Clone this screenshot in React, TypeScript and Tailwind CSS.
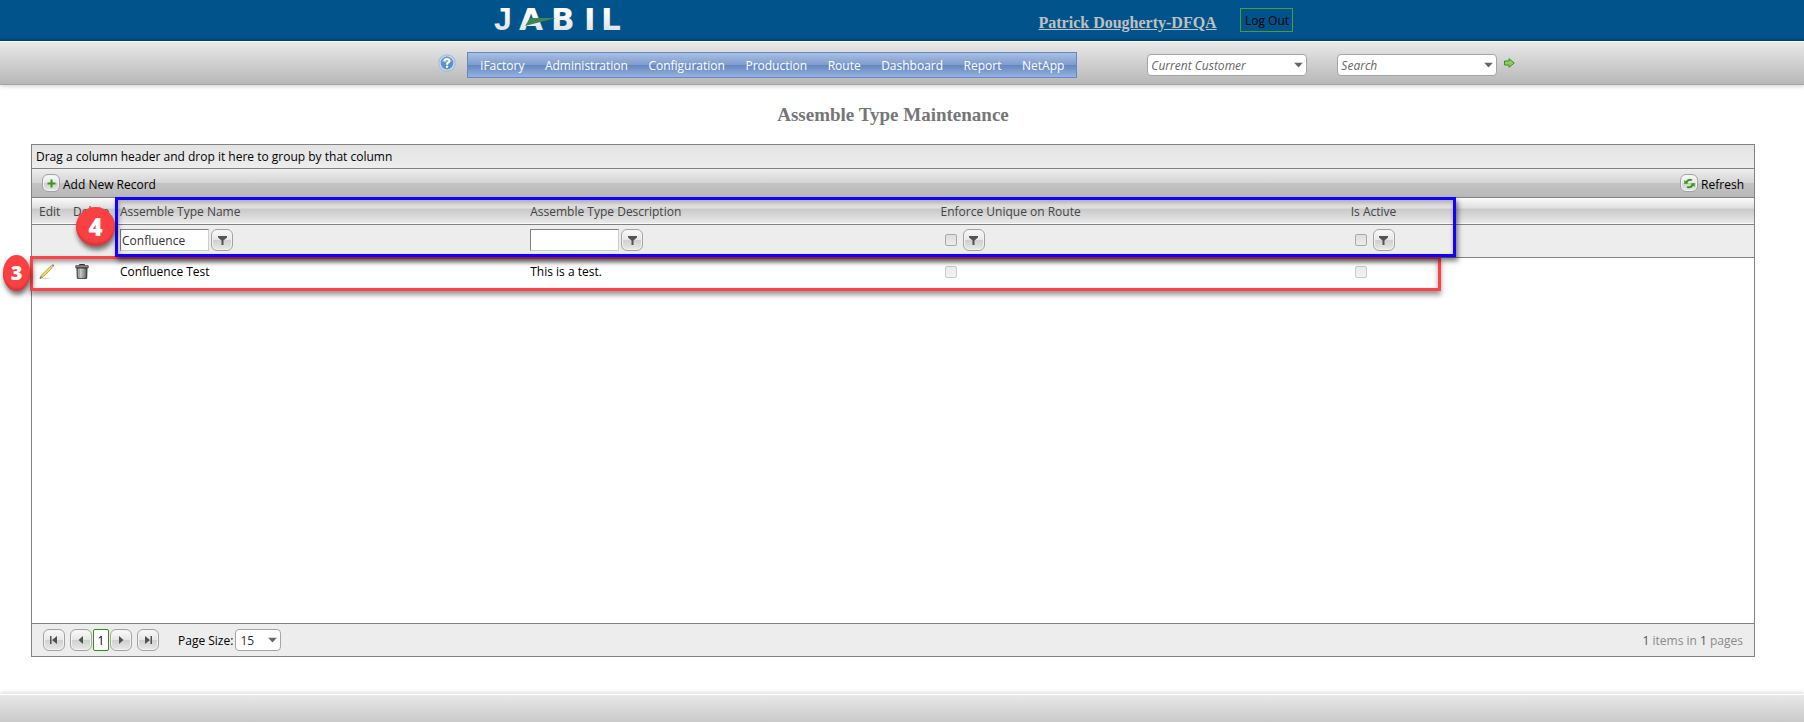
import React from "react";

const menu = ["iFactory", "Administration", "Configuration", "Production", "Route", "Dashboard", "Report", "NetApp"];

const glossy =
  "flex shrink-0 items-center justify-center rounded-md border border-[#a3a3a3] bg-[linear-gradient(#fafafa_0%,#e6e6e6_49%,#cfcfcf_50%,#e9e9e9_100%)] shadow-[inset_0_0_0_1px_#f3f3f3]";

function Logo() {
  return (
    <svg className="overflow-visible" width="136" height="26" viewBox="0 0 136 26" role="img" aria-label="Jabil">
      <defs>
        <linearGradient id="silver" x1="0" y1="0" x2="0" y2="1">
          <stop offset="0.3" stopColor="#ffffff" />
          <stop offset="1" stopColor="#d4d8dc" />
        </linearGradient>
      </defs>
      <g fontWeight="700" fill="url(#silver)">
        <text x="2" y="23" fontFamily="Liberation Sans, sans-serif" fontSize="32">
          J
        </text>
        <text x="27 59 92 109" y="23" fontFamily="DejaVu Sans, sans-serif" fontSize="31">
          ABIL
        </text>
      </g>
      <path d="M33 19 L38 11 H64 Z" fill="#3d8556" />
    </svg>
  );
}

function HelpIcon() {
  return (
    <svg width="18" height="18" viewBox="0 0 18 18" aria-hidden="true">
      <circle cx="9" cy="9" r="8.8" fill="#a3bddd" />
      <circle cx="9" cy="9" r="7.6" fill="#cfdef0" />
      <circle cx="9" cy="9" r="6.400" fill="#5f8fc6" />
      <path d="M4 7.5a5.2 5.2 0 0 1 10 0q-5 2.500-10 0z" fill="#8db0d8" />
      <path d="M6.600 7.200Q6.600 5 9 5T11.400 7.100Q11.400 8.200 9.900 8.900Q9 9.400 9 10.700" fill="none" stroke="#fff" strokeWidth="2" />
      <circle cx="9" cy="12.800" r="1.200" fill="#fff" />
    </svg>
  );
}

function GoIcon() {
  return (
    <svg width="11" height="10" viewBox="0 0 11 10" aria-hidden="true">
      <path d="M.5 3H5V.700L10.300 5L5 9.300V7H.5z" fill="#8fca62" stroke="#3f8d20" />
    </svg>
  );
}

function Caret() {
  return (
    <svg className="pointer-events-none absolute top-1/2 right-1 -translate-y-1/2" width="9" height="5" viewBox="0 0 9 5" aria-hidden="true">
      <path d="M0 0H9L4.500 5z" fill="#666" />
    </svg>
  );
}

function Combo({ label }: { label: string }) {
  return (
    <div className="relative w-40">
      <select
        aria-label={label}
        className="block h-[22px] w-full appearance-none rounded-sm border border-[#a5a5a5] bg-white pt-px pl-[3px] text-xs text-[#666] italic"
      >
        <option>{label}</option>
      </select>
      <Caret />
    </div>
  );
}

function FilterButton({ column }: { column: string }) {
  return (
    <button type="button" aria-label={"Filter " + column} className={glossy + " size-[22px]"}>
      <svg width="9" height="9" viewBox="0 0 9 9" aria-hidden="true">
        <path d="M0 0H9V1.500L5.500 4.500V9H3.500V4.500L0 1.500z" fill="#555" />
      </svg>
    </button>
  );
}

function TextFilter({ column, value }: { column: string; value: string }) {
  return (
    <div className="flex items-center gap-0.5">
      <input
        type="text"
        aria-label={column}
        defaultValue={value}
        className="h-[22px] w-[89px] border border-t-[#7f7f7f] border-r-[#cdcdcd] border-b-[#cdcdcd] border-l-[#7f7f7f] bg-white px-px pt-px text-xs text-[#333]"
      />
      <FilterButton column={column} />
    </div>
  );
}

const box = "block size-3 appearance-none rounded-[2px] border border-[#a9a9a9] bg-[linear-gradient(#dedede,#ececec)]";

function CheckFilter({ column }: { column: string }) {
  return (
    <div className="flex items-center gap-1.5 pl-1">
      <input type="checkbox" aria-label={column} className={box} />
      <FilterButton column={column} />
    </div>
  );
}

function PagerButton({ label, d }: { label: string; d: string }) {
  return (
    <button type="button" aria-label={label} className={glossy + " size-[22px]"}>
      <svg width="8" height="8" viewBox="0 0 8 8" aria-hidden="true">
        <path d={d} fill="#505050" />
      </svg>
    </button>
  );
}

function PencilIcon() {
  return (
    <svg width="16" height="16" viewBox="0 0 16 16" aria-hidden="true">
      <path d="M1 14.500Q6 13 12 14.500Q6 16 1 14.500" fill="#d8d8d8" />
      <path d="M.8 14.500L2 11.700L3.800 13.300z" fill="#ecd9b0" stroke="#6c5b35" strokeWidth=".5" />
      <path d="M2 11.700L11.700 2L13.400 3.700L3.800 13.300z" fill="#f0d95c" stroke="#a28b2c" strokeWidth=".7" />
      <path d="M11.700 2L12.500 1.200L14.200 2.900L13.400 3.700z" fill="#c9ced6" />
      <path d="M12.500 1.200Q13.600 .1 14.800 .8Q15.500 1.800 14.200 2.900z" fill="#dc5560" />
      <path d="M.8 14.500L1.300 13.200L2.200 14z" fill="#333" />
    </svg>
  );
}

function TrashIcon() {
  return (
    <svg width="14" height="15" viewBox="0 0 14 15" aria-hidden="true">
      <defs>
        <linearGradient id="can">
          <stop offset="0" stopColor="#8a8a8a" />
          <stop offset="0.400" stopColor="#dedede" />
          <stop offset="1" stopColor="#4a4a4a" />
        </linearGradient>
      </defs>
      <path d="M2 4H12L11.700 14.300H2.300z" fill="url(#can)" stroke="#333" />
      <path d="M4.800 5.500V13M7 5.500V13M9.200 5.500V13" stroke="#888" strokeWidth=".7" />
      <path d="M.8 1.800H13.200V3.700H.8z" fill="#aaa" stroke="#333" strokeWidth=".9" />
      <path d="M4.500 1.500V.500H9.500V1.500" fill="none" stroke="#333" />
    </svg>
  );
}

export default function App() {
  return (
    <div className="flex min-h-screen flex-col bg-white font-['Open_Sans','Noto_Sans',sans-serif] text-xs text-black">
      <header className="flex h-[41px] shrink-0 items-start bg-[linear-gradient(#00548b_92%,#00426f)] pl-[27.3%]">
        <div className="w-[546px] shrink-0 pt-[7px]">
          <Logo />
        </div>
        <a
          href="#profile"
          className="mt-3 w-[202px] shrink-0 font-['Liberation_Serif',serif] text-base leading-[22px] font-bold whitespace-nowrap text-[#c0c0c0] underline"
        >
          Patrick Dougherty-DFQA
        </a>
        <button type="button" className="mt-2 h-6 w-[53px] shrink-0 border border-[#4f9a3a] pt-0.5 text-xs whitespace-nowrap">
          Log Out
        </button>
      </header>

      <div className="flex h-11 shrink-0 items-start border-t border-b border-t-white border-b-[#a3a3a3] bg-[linear-gradient(#e9e9e9,#b7b7b7)] pl-[24.3%] shadow-[0_2px_4px_rgba(0,0,0,0.15)]">
        <a href="#help" aria-label="Help" className="mt-3 mr-[11px] shrink-0">
          <HelpIcon />
        </a>
        <nav className="mt-[10px] flex h-[26px] w-[610px] shrink-0 items-center justify-between border border-[#6788be] bg-[linear-gradient(#a9bfe3_0%,#7f9dcf_48%,#6587c0_52%,#96b3e1_100%)] px-3 pt-px text-white">
          {menu.map((m) => (
            <a key={m} href={"#" + m}>
              {m}
            </a>
          ))}
        </nav>
        <div className="mt-3 ml-[70px] flex shrink-0 items-start gap-[30px]">
          <Combo label="Current Customer" />
          <Combo label="Search" />
        </div>
        <button type="button" aria-label="Go" className="mt-4 ml-[7px] shrink-0">
          <GoIcon />
        </button>
      </div>

      <main className="flex grow flex-col pt-5 pr-[49px] pb-[37px] pl-[31px]">
        <h1 className="mb-[19px] text-center font-['Liberation_Serif',serif] text-[19px] leading-5 font-bold text-[#767676]">
          Assemble Type Maintenance
        </h1>

        <section className="relative flex grow flex-col border border-[#828282]">
          <div className="h-6 border-b border-[#828282] bg-[linear-gradient(#e3e3e3,#ededed)] px-1 leading-6">
            Drag a column header and drop it here to group by that column
          </div>
          <div className="flex h-[29px] items-center justify-between border-b border-[#828282] bg-[linear-gradient(#eeeeee_0%,#d4d4d4_50%,#c3c3c3_51%,#b8b8b8_100%)] px-[10px]">
            <button type="button" className="flex items-center gap-[3px]">
              <span className={glossy + " size-[18px]"}>
                <svg width="9" height="9" viewBox="0 0 9 9" aria-hidden="true">
                  <path d="M3.500 0.500H5.500V3.500H8.500V5.500H5.500V8.500H3.500V5.500H.5V3.500H3.500z" fill="#2f9a12" />
                </svg>
              </span>
              <span className="pt-[3px]">Add New Record</span>
            </button>
            <button type="button" className="flex items-center gap-[3px]">
              <span className={glossy + " size-[18px]"}>
                <svg width="11" height="11" viewBox="0 0 11 11" aria-hidden="true">
                  <path d="M.3 6V2L1.600 3.200Q4.500-.8 8.500 1.500L7.300 3.100Q5.200 2 3.400 4.300L4.600 5.500z" fill="#359b18" />
                  <path d="M10.700 5V9L9.400 7.800Q6.500 11.800 2.500 9.500L3.700 7.900Q5.800 9 7.600 6.700L6.400 5.500z" fill="#359b18" />
                </svg>
              </span>
              <span className="pt-[3px]">Refresh</span>
            </button>
          </div>

          <table className="w-full table-fixed border-collapse text-left">
            <colgroup>
              <col className="w-[34px]" />
              <col className="w-[47px]" />
              <col />
              <col />
              <col />
              <col />
            </colgroup>
            <thead className="text-[#444]">
              <tr className="h-[26px] border-b border-[#828282] bg-[linear-gradient(#fafafa_0%,#e0e0e0_40%,#c9c9c9_45%,#e9e9e9_100%)] [&>th]:p-0 [&>th]:pt-0.5 [&>th]:pl-[7px] [&>th]:font-normal">
                <th>Edit</th>
                <th>Delete</th>
                <th>Assemble Type Name</th>
                <th>Assemble Type Description</th>
                <th>Enforce Unique on Route</th>
                <th>Is Active</th>
              </tr>
              <tr className="h-[33px] border-b border-[#828282] bg-[#ededed] [&>td]:p-0 [&>td]:pb-px [&>td]:pl-[7px]">
                <td />
                <td />
                <td>
                  <TextFilter column="Assemble Type Name" value="Confluence" />
                </td>
                <td>
                  <TextFilter column="Assemble Type Description" value="" />
                </td>
                <td>
                  <CheckFilter column="Enforce Unique on Route" />
                </td>
                <td>
                  <CheckFilter column="Is Active" />
                </td>
              </tr>
            </thead>
            <tbody>
              <tr className="h-[29px] [&>td]:p-0 [&>td]:pl-[7px]">
                <td>
                  <button type="button" aria-label="Edit" className="block">
                    <PencilIcon />
                  </button>
                </td>
                <td>
                  <button type="button" aria-label="Delete" className="ml-0.5 block">
                    <TrashIcon />
                  </button>
                </td>
                <td>Confluence Test</td>
                <td>This is a test.</td>
                <td>
                  <div className="pl-1">
                    <input type="checkbox" aria-label="Enforce unique on route" disabled className={box + " opacity-60"} />
                  </div>
                </td>
                <td>
                  <div className="pl-1">
                    <input type="checkbox" aria-label="Is active" disabled className={box + " opacity-60"} />
                  </div>
                </td>
              </tr>
            </tbody>
          </table>

          <div className="mt-auto flex h-[33px] items-center border-t border-[#828282] bg-[#ededed] px-[11px]">
            <div className="flex items-center gap-[5px]">
              <PagerButton label="First page" d="M0 0H1.500V8H0zM7 0V8L2 4z" />
              <div className="flex items-center gap-px">
                <PagerButton label="Previous page" d="M6 0V8L1.500 4z" />
                <a href="#page-1" className="h-[22px] w-4 rounded-[2px] border border-[#2a9309] bg-white text-center leading-[22px]">
                  1
                </a>
                <PagerButton label="Next page" d="M2 0V8L6.500 4z" />
              </div>
              <PagerButton label="Last page" d="M1 0V8L6 4zM6.500 0H8V8H6.500z" />
            </div>
            <label htmlFor="page-size" className="ml-[19px] pt-0.5">
              Page Size:
            </label>
            <div className="relative ml-0.5 w-[46px]">
              <select id="page-size" className="block h-[22px] w-full appearance-none rounded-sm border border-[#a5a5a5] bg-white pt-px pl-1 text-xs text-[#333]">
                <option>15</option>
              </select>
              <Caret />
            </div>
            <p className="ml-auto pt-0.5 text-[#8a8a8a]">
              <span className="text-[#555]">1</span> items in <span className="text-[#555]">1</span> pages
            </p>
          </div>

          <div className="pointer-events-none absolute top-[111px] right-[313px] -left-[2px] h-[35px] border-3 border-[#ff4245] shadow-[0_4px_5px_rgba(0,0,0,0.4),inset_0_3px_5px_rgba(0,0,0,0.4)]" />
          <div className="pointer-events-none absolute top-[52px] right-[298px] left-[83px] h-[60px] border-3 border-[#1400ff] shadow-[2px_4px_5px_rgba(0,0,0,0.5),inset_1px_3px_5px_rgba(0,0,0,0.3)]" />
          <div className="pointer-events-none absolute top-[62px] left-[44px] flex size-[39px] items-center justify-center rounded-full bg-[#fb4043] font-['Open_Sans',sans-serif] text-2xl font-extrabold text-white shadow-[1px_4px_5px_rgba(0,0,0,0.55),inset_0_-3px_2px_#d9383b]">
            4
          </div>
          <div className="pointer-events-none absolute top-[110px] -left-[29px] flex h-9 w-[27px] items-center justify-center rounded-[50%] bg-[#fb4043] font-['Open_Sans',sans-serif] text-xl font-extrabold text-white shadow-[1px_4px_5px_rgba(0,0,0,0.55),inset_0_-3px_2px_#d9383b]">
            3
          </div>
        </section>
      </main>

      <footer className="h-7 shrink-0 border-t border-white bg-[linear-gradient(#e8e8e8,#cacaca)] shadow-[0_-2px_4px_rgba(0,0,0,0.12)]" />
    </div>
  );
}
